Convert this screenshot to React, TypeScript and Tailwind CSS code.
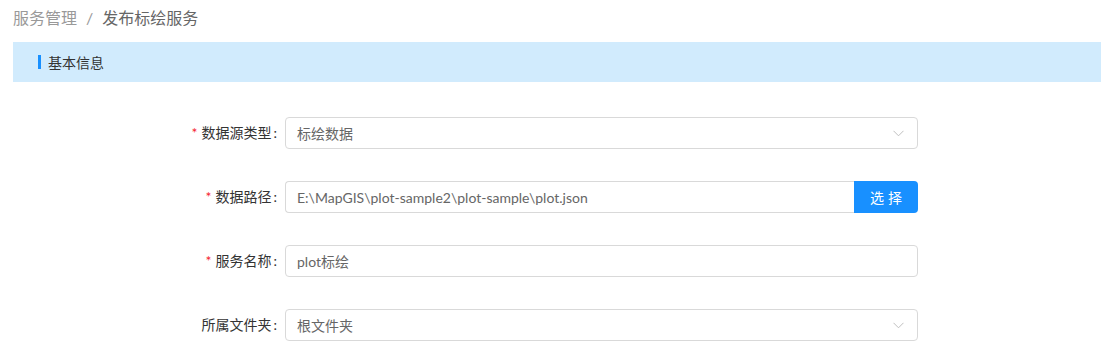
const font = {
  fontFamily: '"Lato", "Noto Sans CJK SC", "Noto Sans", sans-serif',
};

type FieldProps = {
  label: string;
  required?: boolean;
  children: React.ReactNode;
};

function Field({ label, required, children }: FieldProps) {
  return (
    <div className="flex items-center h-8">
      <div className="w-[272px] text-right text-[14px] text-[#333] pr-2 leading-8">
        {required && <span className="text-[#f5222d] mr-1">*</span>}
        {label}
        <span className="ml-[2px]">:</span>
      </div>
      <div className="w-[633px] h-8">{children}</div>
    </div>
  );
}

function Chevron() {
  return (
    <svg width="11" height="7" viewBox="0 0 11 7" fill="none" className="mr-[2px]">
      <path d="M0.5 0.8 L5.5 5.8 L10.5 0.8" stroke="#bfbfbf" strokeWidth="1" />
    </svg>
  );
}

function SelectBox({ value }: { value: string }) {
  return (
    <div className="flex items-center justify-between h-8 border border-[#d9d9d9] rounded bg-white px-[11px]">
      <span className="text-[14px] text-[#666]">{value}</span>
      <Chevron />
    </div>
  );
}

function TextBox({ value }: { value: string }) {
  return (
    <div className="flex items-center h-8 border border-[#d9d9d9] rounded bg-white px-[11px]">
      <span className="text-[14px] text-[#666]">{value}</span>
    </div>
  );
}

export default function App() {
  return (
    <div className="bg-white min-h-[353px] pl-[13px] pr-[10px]" style={font}>
      <div className="pt-[6px] h-[42px] leading-6 text-[16px]">
        <span className="text-[#999]">服务管理</span>
        <span className="text-[#999] mx-[9px]">/</span>
        <span className="text-[#666]">发布标绘服务</span>
      </div>
      <div className="h-10 bg-[#d1ebfd] flex items-center pl-[25px]">
        <span className="w-[3px] h-[14px] bg-[#1890ff] mr-[7px]" />
        <span className="text-[14px] text-[#333]">基本信息</span>
      </div>
      <div className="pt-[35px] flex flex-col gap-8">
        <Field label="数据源类型" required>
          <SelectBox value="标绘数据" />
        </Field>
        <Field label="数据路径" required>
          <div className="flex h-8">
            <div className="flex-1 flex items-center border border-[#d9d9d9] border-r-0 rounded-l bg-white px-[11px]">
              <span className="text-[14px] text-[#666]">
                E:\MapGIS\plot-sample2\plot-sample\plot.json
              </span>
            </div>
            <button className="w-16 h-8 bg-[#1890ff] text-white text-[14px] rounded-r tracking-[4px] pl-1">
              选择
            </button>
          </div>
        </Field>
        <Field label="服务名称" required>
          <TextBox value="plot标绘" />
        </Field>
        <Field label="所属文件夹">
          <SelectBox value="根文件夹" />
        </Field>
      </div>
    </div>
  );
}
